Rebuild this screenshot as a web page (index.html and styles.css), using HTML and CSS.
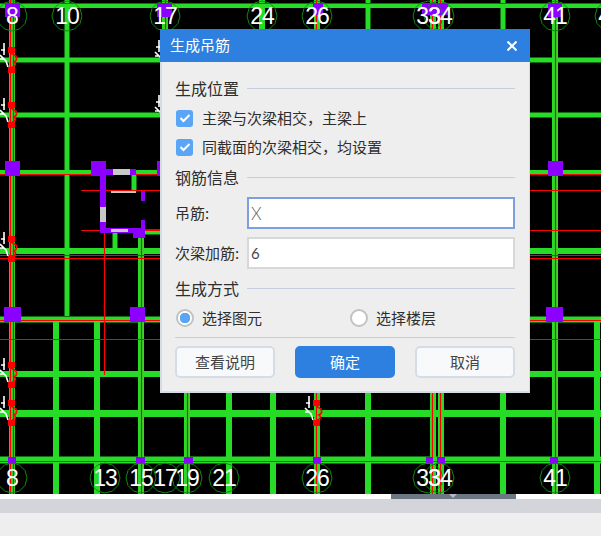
FILE: index.html
```html
<!DOCTYPE html>
<html lang="zh-CN">
<head>
  <meta charset="UTF-8" />
  <meta name="viewport" content="width=device-width, initial-scale=1.0"/>
  <title>生成吊筋</title>
  <link rel="stylesheet" href="styles.css">
</head>
<body>
  <div class="cad-view">
    <svg class="cad-canvas" width="601" height="494" viewBox="0 0 601 494">
      <defs>
        <polygon id="axis" points="15,0 13,7.5 7.5,13 0,15 -7.5,13 -13,7.5 -15,0 -13,-7.5 -7.5,-13 0,-15 7.5,-13 13,-7.5"/>
        <g id="hook">
          <rect class="red-fill" x="0" y="0" width="7" height="6"/>
          <rect class="red-fill" x="0" y="20" width="7" height="6"/>
          <path class="red-line thick" d="M3 6 L8 9 Q10 13 6 15 Q10 18 4 20"/>
          <path class="white-line" d="M-4 -4 V8 M-8 8 L-2 14 L0 20 M-7 3 H-3 M-8 12 H-4"/>
        </g>
      </defs>

      <!-- beams -->
      <g class="green-line w5">
        <path d="M0 5.5 H601 M0 60 H601 M0 115 H601 M0 172.5 H601"/>
        <path d="M67 0 V316"/>
        <path d="M134 172 V190 M115 233 V250 M145 232 H165"/>
        <path d="M368 0 V30 M503 0 V30"/>
      </g>
      <g class="green-line w6">
        <path d="M0 251 H601 M0 319.5 H601 M0 374 H601"/>
        <path d="M12 0 V494 M141 238 V494 M165 0 V30 M262 0 V30 M317 0 V494 M433 0 V494 M441 0 V494 M555 0 V494"/>
        <path d="M56 322 V494 M97 322 V494 M187 322 V494 M229 322 V494 M273 322 V494 M368 322 V494 M503 322 V494 M597 322 V494"/>
      </g>
      <g class="green-line w7">
        <path d="M0 413.5 H601 M0 460 H601"/>
      </g>

      <!-- rebar lines -->
      <g class="red-line">
        <path d="M0 3.5 H601 M0 174.5 H601 M81 190.5 H601 M81 230.5 H601 M0 255.5 H601 M0 258.5 H601 M0 320.5 H601 M0 339.5 H601 M0 461.5 H601"/>
        <path d="M10.5 0 V494 M13.5 0 V494 M104.5 175 V375 M141.5 238 V494 M165.5 0 V30 M187.5 322 V494 M316.5 0 V494 M432.5 0 V494 M440.5 0 V494 M555.5 0 V494"/>
      </g>

      <!-- columns -->
      <g class="purple-fill">
        <rect x="5" y="161" width="15" height="15"/>
        <rect x="91" y="161" width="15" height="15"/>
        <rect x="157" y="161" width="10" height="15"/>
        <rect x="548" y="161" width="15" height="15"/>
        <rect x="4" y="307" width="17" height="15"/>
        <rect x="130" y="307" width="15" height="15"/>
        <rect x="546" y="307" width="17" height="15"/>
        <rect x="5" y="4" width="15" height="13"/>
        <rect x="157" y="4" width="15" height="13"/>
        <rect x="313" y="4" width="10" height="11"/>
        <rect x="422" y="4" width="26" height="11"/>
        <rect x="548" y="4" width="14" height="13"/>
        <rect x="8" y="457" width="8" height="7"/>
        <rect x="136" y="457" width="9" height="7"/>
        <rect x="184" y="457" width="9" height="7"/>
        <rect x="313" y="457" width="8" height="7"/>
        <rect x="426" y="457" width="7" height="7"/>
        <rect x="437" y="457" width="8" height="7"/>
        <rect x="550" y="457" width="8" height="7"/>
        <!-- opening walls -->
        <rect x="100" y="169" width="36" height="6"/>
        <rect x="100" y="175" width="6" height="58"/>
        <rect x="141" y="191" width="4" height="10"/>
        <rect x="141" y="220" width="4" height="10"/>
        <rect x="100" y="228" width="45" height="5"/>
        <rect x="133" y="233" width="12" height="5"/>
      </g>
      <g class="grey-fill">
        <rect x="113" y="169" width="17" height="6"/>
        <rect x="111" y="191" width="25" height="2"/>
        <rect x="100" y="207" width="6" height="15"/>
        <rect x="111" y="229" width="17" height="3"/>
      </g>

      <!-- hanger marks -->
      <use href="#hook" x="8" y="47"/>
      <use href="#hook" x="8" y="102"/>
      <use href="#hook" x="8" y="236"/>
      <use href="#hook" x="8" y="362"/>
      <use href="#hook" x="8" y="400"/>
      <use href="#hook" x="313" y="400"/>
      <use href="#hook" x="163" y="44"/>
      <use href="#hook" x="163" y="99"/>

      <!-- axis bubbles -->
      <g class="axis-ring">
        <use href="#axis" x="12" y="16"/>
        <use href="#axis" x="67" y="16"/>
        <use href="#axis" x="165" y="16"/>
        <use href="#axis" x="262" y="16"/>
        <use href="#axis" x="317" y="16"/>
        <use href="#axis" x="428" y="16"/>
        <use href="#axis" x="439" y="16"/>
        <use href="#axis" x="555" y="16"/>
        <use href="#axis" x="610" y="16"/>
        <use href="#axis" x="12" y="478"/>
        <use href="#axis" x="105" y="478"/>
        <use href="#axis" x="141" y="478"/>
        <use href="#axis" x="165" y="478"/>
        <use href="#axis" x="187" y="478"/>
        <use href="#axis" x="224" y="478"/>
        <use href="#axis" x="317" y="478"/>
        <use href="#axis" x="428" y="478"/>
        <use href="#axis" x="439" y="478"/>
        <use href="#axis" x="555" y="478"/>
      </g>
      <g class="axis-label">
        <text x="12" y="24">8</text>
        <text x="67" y="24">10</text>
        <text x="165" y="24">17</text>
        <text x="262" y="24">24</text>
        <text x="317" y="24">26</text>
        <text x="428" y="24">33</text>
        <text x="440" y="24">34</text>
        <text x="555" y="24">41</text>
        <text x="610" y="24">41</text>
        <text x="12" y="486">8</text>
        <text x="105" y="486">13</text>
        <text x="141" y="486">15</text>
        <text x="165" y="486">17</text>
        <text x="187" y="486">19</text>
        <text x="224" y="486">21</text>
        <text x="317" y="486">26</text>
        <text x="428" y="486">33</text>
        <text x="440" y="486">34</text>
        <text x="555" y="486">41</text>
      </g>
    </svg>

    <div class="dialog">
      <div class="dialog-title">
        <span class="txt">生成吊筋</span>
        <svg class="close-icon" width="10" height="10" viewBox="0 0 10 10"><path d="M0.5 0.5 L9.5 9.5 M9.5 0.5 L0.5 9.5"/></svg>
      </div>
      <div class="dialog-body">
        <div class="section-head"><span class="txt">生成位置</span><i></i></div>
        <label class="check-row">
          <span class="checkbox"><svg width="12" height="10" viewBox="0 0 12 10"><path d="M1.5 5 L4.5 8 L10.5 2"/></svg></span>
          <span class="txt">主梁与次梁相交，主梁上</span>
        </label>
        <label class="check-row second">
          <span class="checkbox"><svg width="12" height="10" viewBox="0 0 12 10"><path d="M1.5 5 L4.5 8 L10.5 2"/></svg></span>
          <span class="txt">同截面的次梁相交，均设置</span>
        </label>

        <div class="section-head middle"><span class="txt">钢筋信息</span><i></i></div>
        <div class="field-row">
          <span class="field-label txt">吊筋:</span>
          <input class="field focus" type="text" value="X">
        </div>
        <div class="field-row second-field">
          <span class="field-label txt">次梁加筋:</span>
          <input class="field" type="text" value="6">
        </div>

        <div class="section-head last"><span class="txt">生成方式</span><i></i></div>
        <div class="radio-row">
          <label class="radio-item"><span class="radio on"></span><span class="txt">选择图元</span></label>
          <label class="radio-item"><span class="radio"></span><span class="txt">选择楼层</span></label>
        </div>

        <div class="divider"></div>
        <div class="button-row">
          <button class="btn">查看说明</button>
          <button class="btn primary">确定</button>
          <button class="btn">取消</button>
        </div>
      </div>
    </div>
  </div>

  <div class="scroll-strip"><div class="scroll-handle"></div></div>
  <div class="tab-strip"></div>
  <div class="status-strip"></div>
</body>
</html>
```

FILE: styles.css
```css
body {
  margin: 0;
  width: 601px;
  height: 536px;
  overflow: hidden;
  display: flex;
  flex-direction: column;
  background: #eeeeee;
  font-family: "Noto Sans CJK SC", "Liberation Sans", sans-serif;
  font-size: 15px;
  color: #2e2e2e;
}

/* Noto sits a bit low in its line box */
.txt {
  padding-bottom: 2px;
}

/* Drawing area */
.cad-view {
  position: relative;
  height: 494px;
  background: #000000;
}

.cad-canvas {
  display: block;
}

.green-line {
  fill: none;
  stroke: #27dc27;
}
.w5 { stroke-width: 5; }
.w6 { stroke-width: 6; }
.w7 { stroke-width: 7; }

.red-line {
  fill: none;
  stroke: #ff0000;
  stroke-width: 1.2;
}
.red-line.thick { stroke-width: 1.6; }
.red-fill { fill: #ff0000; }
.white-line {
  fill: none;
  stroke: #ffffff;
  stroke-width: 1.6;
}

.purple-fill { fill: #8b00ff; }
.grey-fill { fill: #c8c8c8; }

.axis-ring {
  fill: none;
  stroke: #0f8a0f;
  stroke-width: 1;
}

.axis-label {
  fill: #ffffff;
  font-family: "Liberation Sans", sans-serif;
  font-size: 23px;
  letter-spacing: -1px;
  text-anchor: middle;
}

/* Dialog */
.dialog {
  position: absolute;
  left: 160px;
  top: 29px;
  width: 370px;
  height: 364px;
  box-sizing: border-box;
  background: #eeeeee;
  border: 2px solid #d6dce6;
  border-top: 0;
  border-right-width: 1px;
}

.dialog-title {
  display: flex;
  justify-content: space-between;
  align-items: center;
  height: 33px;
  margin: 0 -1px 0 -2px;
  padding: 0 13px 0 10px;
  background: #2e80e0;
  color: #ffffff;
  font-size: 15px;
}

.close-icon path {
  fill: none;
  stroke: #ffffff;
  stroke-width: 2;
}

.dialog-body {
  padding: 17px 14px 0 13px;
}

.section-head {
  display: flex;
  align-items: center;
  gap: 8px;
  height: 20px;
  font-size: 16px;
  line-height: 20px;
}
.section-head i {
  flex: 1;
  height: 1px;
  margin-top: -2px;
  background: #c6cfde;
}
.section-head.middle { margin-top: 12px; }
.section-head.last { margin-top: 10px; }

.check-row {
  display: flex;
  align-items: center;
  gap: 9px;
  height: 18px;
  margin-top: 10px;
  padding-left: 1px;
}
.check-row.second { margin-top: 11px; }

.checkbox {
  display: flex;
  justify-content: center;
  align-items: center;
  width: 17px;
  height: 17px;
  border-radius: 3px;
  background: #5aa5f5;
}
.checkbox path {
  fill: none;
  stroke: #ffffff;
  stroke-width: 2;
}

.field-row {
  display: flex;
  align-items: center;
  margin-top: 9px;
}
.field-row.second-field { margin-top: 8px; }

.field-label {
  width: 72px;
  flex: none;
}

.field {
  flex: 1;
  min-width: 0;
  height: 32px;
  box-sizing: border-box;
  margin: 0;
  padding: 0 2px;
  border: 2px solid #d8d8d8;
  background: #ffffff;
  color: #4a4a4a;
  font-family: "Lato", "Liberation Sans", sans-serif;
  font-size: 15px;
  outline: none;
}
.field.focus {
  border-color: #7d9fe0;
  color: #5c5c5c;
  font-size: 17px;
  font-weight: 300;
}

.radio-row {
  display: flex;
  margin-top: 10px;
  height: 18px;
}

.radio-item {
  display: flex;
  align-items: center;
  gap: 8px;
  flex: none;
  width: 174px;
  padding-left: 1px;
  box-sizing: border-box;
}

.radio {
  width: 18px;
  height: 18px;
  box-sizing: border-box;
  border: 2px solid #c2c2c2;
  border-radius: 50%;
  background: #ffffff;
}
.radio.on {
  background: radial-gradient(circle, #5aa5f5 0, #5aa5f5 5px, #ffffff 5.5px);
}

.divider {
  height: 1px;
  margin-top: 10px;
  background: #c6cfde;
}

.button-row {
  display: flex;
  justify-content: space-between;
  margin-top: 8px;
}

.btn {
  width: 100px;
  height: 32px;
  box-sizing: border-box;
  padding: 0 0 2px;
  border: 2px solid #d5dbe7;
  border-radius: 5px;
  background: #f8f9fb;
  color: #444444;
  font-family: "Noto Sans CJK SC", "Liberation Sans", sans-serif;
  font-size: 15px;
}
.btn.primary {
  border-color: #2e80e0;
  background: #2e80e0;
  color: #ffffff;
}

/* Bottom strips */
.scroll-strip {
  height: 5px;
  background: #ffffff;
  padding-left: 391px;
}

.scroll-handle {
  position: relative;
  width: 125px;
  height: 5px;
  background: #6c7783;
}
.scroll-handle::after {
  content: "";
  position: absolute;
  left: 58px;
  top: 0;
  border: 4px solid transparent;
  border-top-color: #b4bac1;
  border-bottom: 0;
}

.tab-strip {
  height: 14px;
  background: #d4d5da;
}

.status-strip {
  flex: 1;
  background: #eeeeee;
}
```
